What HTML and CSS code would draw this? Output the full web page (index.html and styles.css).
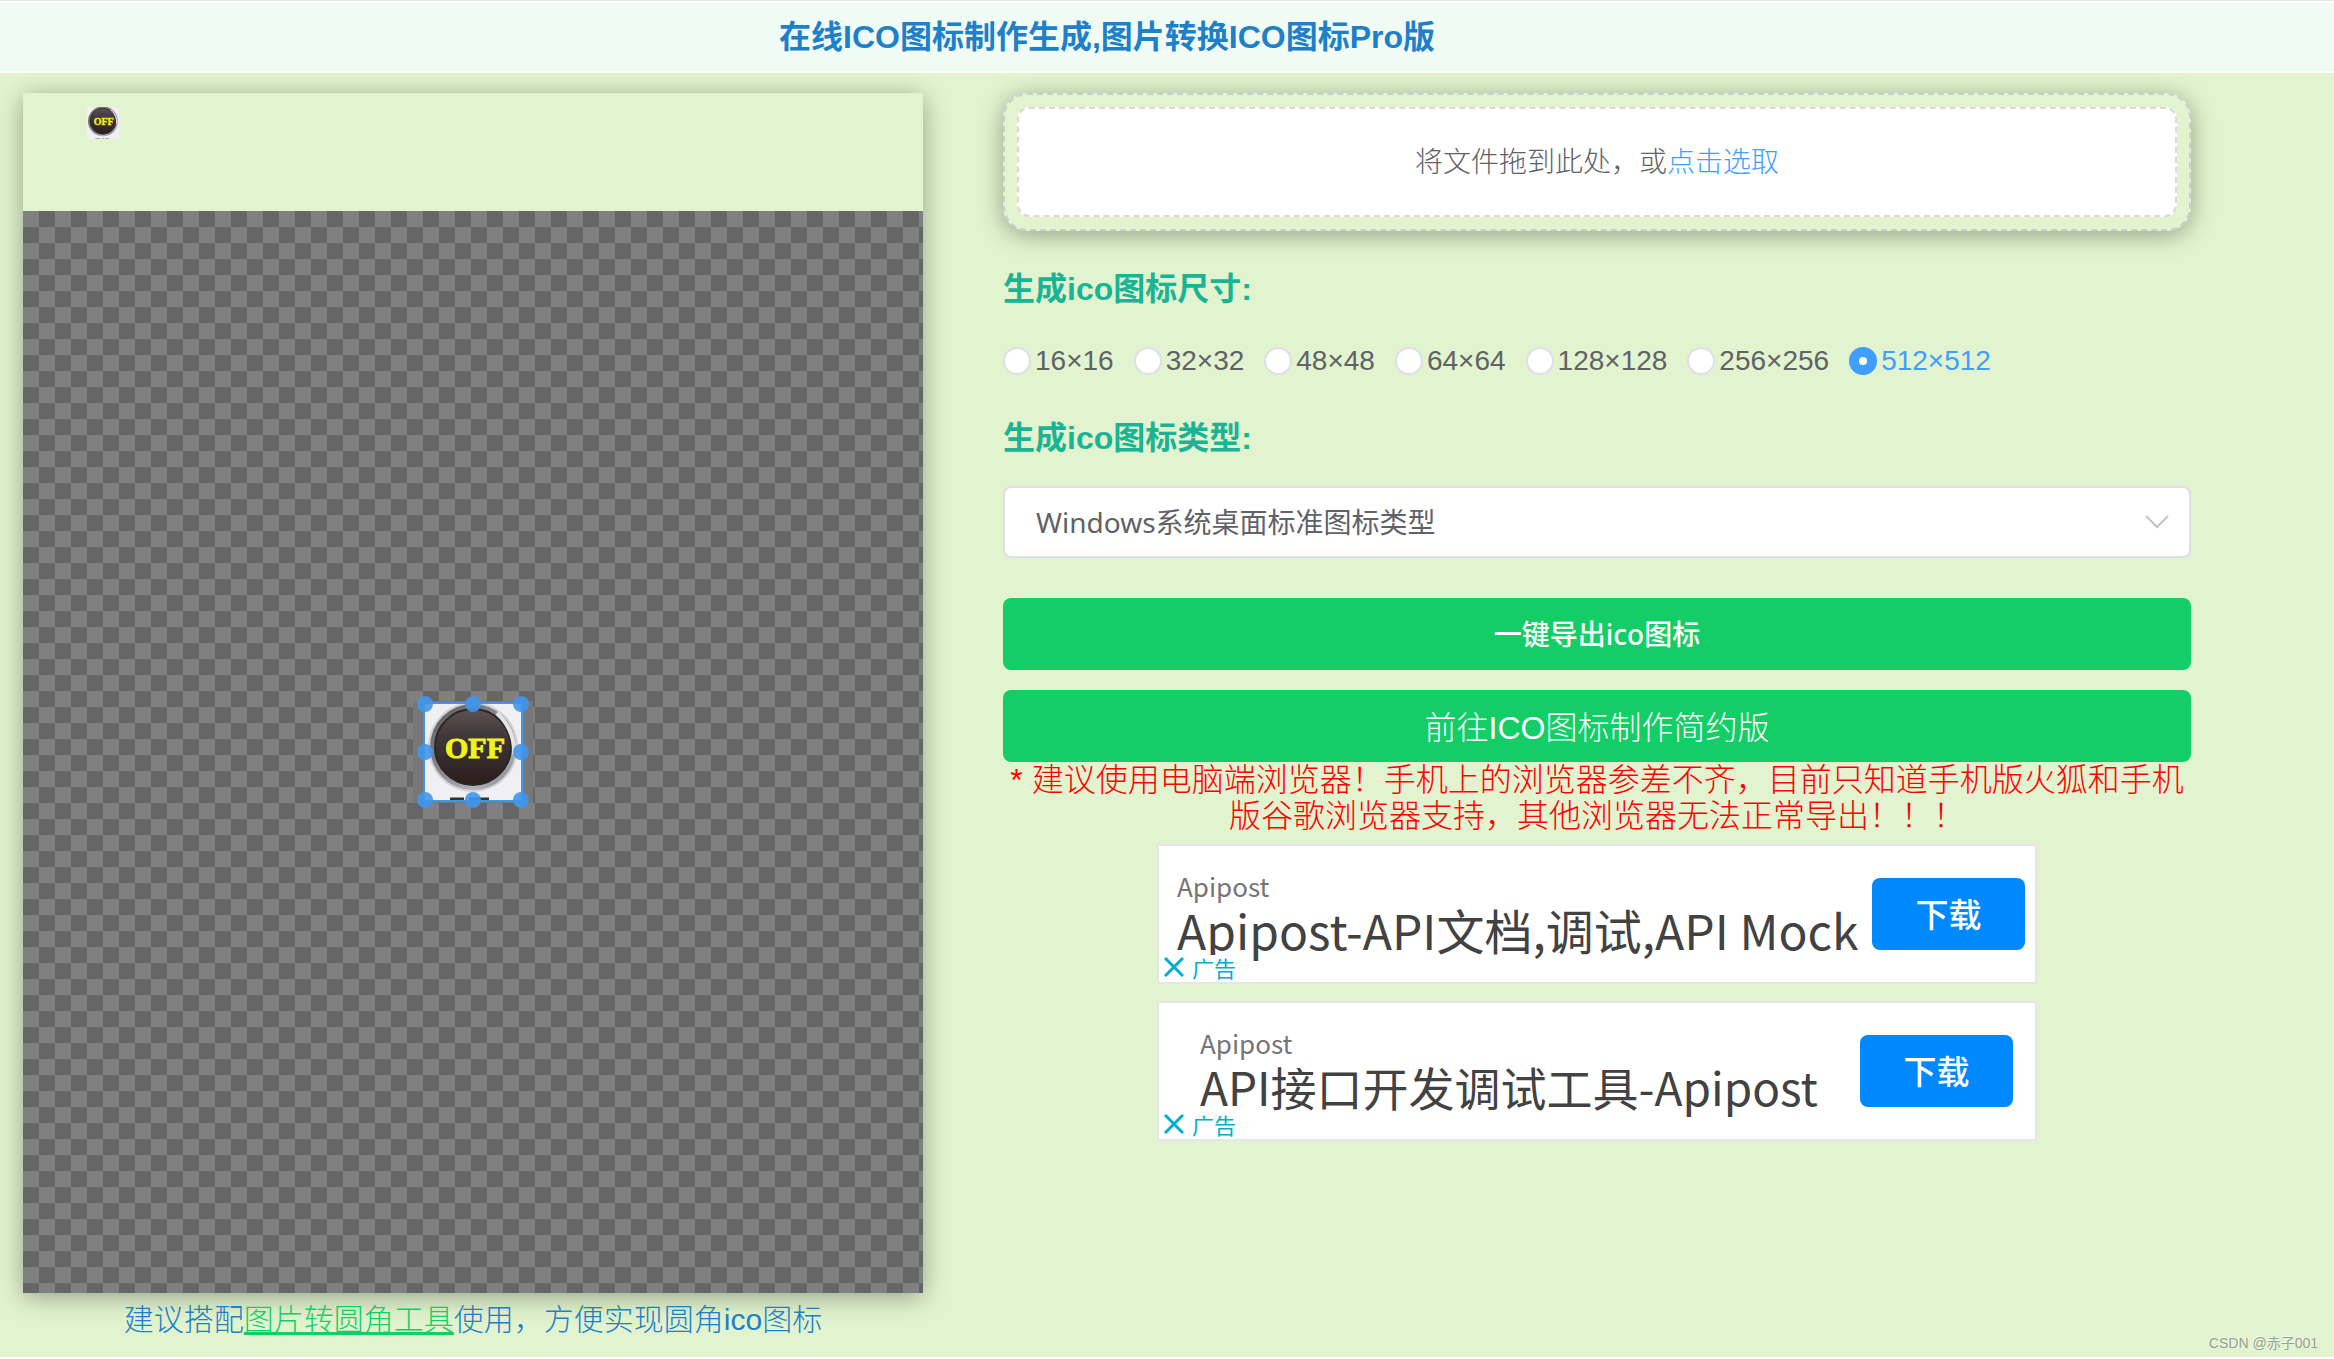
FILE: index.html
```html
<!DOCTYPE html>
<html lang="zh-CN">
<head>
<meta charset="utf-8">
<meta name="viewport" content="width=device-width, initial-scale=1">
<title>在线ICO图标制作生成</title>
<link rel="stylesheet" href="styles.css">
</head>
<body>
<header class="site-header">
  <h1 class="site-title">在线ICO图标制作生成,图片转换ICO图标Pro版</h1>
</header>

<main class="layout">
  <section class="editor">
    <div class="panel">
      <div class="preview">
        <svg class="thumb" viewBox="0 0 96 96" role="img" aria-label="OFF">
          <defs>
            <linearGradient id="knob" x1="0" y1="0" x2="0" y2="1">
              <stop offset="0" stop-color="#5c5250"/>
              <stop offset=".35" stop-color="#40383a"/>
              <stop offset="1" stop-color="#2a1e1c"/>
            </linearGradient>
            <linearGradient id="rim" x1="0" y1="0" x2="1" y2="1">
              <stop offset="0" stop-color="#5a5656"/>
              <stop offset=".45" stop-color="#8a8a8e"/>
              <stop offset=".75" stop-color="#b4b4b8"/>
              <stop offset="1" stop-color="#6c6c70"/>
            </linearGradient>
          </defs>
          <rect width="96" height="96" fill="#f0f0f2"/>
          <circle cx="48" cy="43" r="45" fill="url(#rim)"/>
          <circle cx="48" cy="43" r="39" fill="url(#knob)" stroke="#2c2626" stroke-width="2"/>
          <path d="M72 9Q90 26 89 50" fill="none" stroke="#e4e4e8" stroke-width="3"/>
          <path d="M25 95h14M44 95h8M56 95h10" stroke="#777" stroke-width="2"/>
          <text x="50" y="54" text-anchor="middle" class="off-text">OFF</text>
        </svg>
      </div>
      <div class="canvas">
        <div class="stage">
          <div class="crop">
            <svg class="crop-image" viewBox="0 0 96 96" role="img" aria-label="OFF">
              <rect width="96" height="96" fill="#f0f0f2"/>
              <circle cx="48" cy="43" r="45" fill="#d2d2d6"/>
              <circle cx="48" cy="43" r="43" fill="url(#rim)"/>
              <circle cx="48" cy="43" r="38" fill="url(#knob)" stroke="#2c2626" stroke-width="2"/>
              <path d="M72 9Q90 26 89 50" fill="none" stroke="#e4e4e8" stroke-width="4"/>
              <path d="M25 95h14M44 95h20" stroke="#333" stroke-width="3"/>
              <text x="50" y="54" text-anchor="middle" class="off-text">OFF</text>
            </svg>
            <span class="handle nw"></span><span class="handle n"></span><span class="handle ne"></span>
            <span class="handle w"></span><span class="handle e"></span>
            <span class="handle sw"></span><span class="handle s"></span><span class="handle se"></span>
          </div>
        </div>
      </div>
    </div>
    <p class="tip">建议搭配<a class="tip-link" href="#">图片转圆角工具</a>使用，方便实现圆角ico图标</p>
  </section>

  <section class="settings">
    <div class="upload">
      <div class="dropzone">将文件拖到此处，或<a class="pick" href="#">点击选取</a></div>
    </div>

    <h2 class="label" id="size-label">生成ico图标尺寸:</h2>
    <div class="sizes" role="radiogroup" aria-labelledby="size-label">
      <label class="size"><input class="radio" type="radio" name="size"><span>16×16</span></label>
      <label class="size"><input class="radio" type="radio" name="size"><span>32×32</span></label>
      <label class="size"><input class="radio" type="radio" name="size"><span>48×48</span></label>
      <label class="size"><input class="radio" type="radio" name="size"><span>64×64</span></label>
      <label class="size"><input class="radio" type="radio" name="size"><span>128×128</span></label>
      <label class="size"><input class="radio" type="radio" name="size"><span>256×256</span></label>
      <label class="size"><input class="radio" type="radio" name="size" checked><span>512×512</span></label>
    </div>

    <h2 class="label"><label for="type">生成ico图标类型:</label></h2>
    <div class="select-box">
      <select class="select" id="type"><option>Windows系统桌面标准图标类型</option></select>
      <svg class="chevron" viewBox="0 0 24 14" aria-hidden="true"><path d="M1 1l11 11L23 1"/></svg>
    </div>

    <div class="actions">
      <button class="btn btn-export" type="button">一键导出ico图标</button>
      <button class="btn btn-simple" type="button">前往ICO图标制作简约版</button>
    </div>
    <p class="warning">* 建议使用电脑端浏览器！手机上的浏览器参差不齐，目前只知道手机版火狐和手机版谷歌浏览器支持，其他浏览器无法正常导出！！！</p>

    <div class="ads">
      <article class="ad">
        <div class="ad-text">
          <span class="ad-brand">Apipost</span>
          <span class="ad-title">Apipost-API文档,调试,API Mock</span>
        </div>
        <button class="ad-btn" type="button">下载</button>
        <div class="ad-mark"><svg class="ad-close" viewBox="0 0 20 20"><path d="M1 1l18 18M19 1L1 19"/></svg>广告</div>
      </article>
      <article class="ad ad-inset">
        <div class="ad-text">
          <span class="ad-brand">Apipost</span>
          <span class="ad-title">API接口开发调试工具-Apipost</span>
        </div>
        <button class="ad-btn" type="button">下载</button>
        <div class="ad-mark"><svg class="ad-close" viewBox="0 0 20 20"><path d="M1 1l18 18M19 1L1 19"/></svg>广告</div>
      </article>
    </div>
  </section>
</main>
<div class="watermark">CSDN @赤子001</div>
</body>
</html>
```

FILE: styles.css
```css
* { box-sizing: border-box; }

body {
  margin: 0;
  min-height: 100vh;
  position: relative;
  border-bottom: 2px solid #fff;
  background: #e2f4cf;
  color: #606266;
  font-family: "Liberation Sans", "Noto Sans CJK SC", sans-serif;
  font-size: 28px;
}

h1, h2, p { margin: 0; }
.off-text { font: bold 30px "Liberation Serif", serif; fill: #f2f21c; stroke: #f2f21c; stroke-width: 1; }

.site-header {
  padding: 14px 120px 12px 0;
  background: #f0fbf6;
  border-top: 1px solid #e4e4e4;
  border-bottom: 2px solid #fff;
  box-shadow: inset 0 2px #fff;
  text-align: center;
}
.site-title { color: #1e80c8; font-size: 32px; line-height: 44px; }

.layout {
  display: grid;
  grid-template-columns: 900fr 1188fr;
  gap: 80px;
  align-items: start;
  padding: 20px 143px 0 23px;
}

.panel {
  display: flex;
  flex-direction: column;
  aspect-ratio: 3 / 4;
  box-shadow: 0 4px 24px rgba(0, 0, 0, .35);
}
.preview { height: 118px; padding: 14px 64px; }
.thumb { display: block; width: 32px; height: 32px; }
.canvas {
  flex: 1;
  display: flex;
  align-items: center;
  justify-content: center;
  background: repeating-conic-gradient(#666 0 25%, #808080 0 50%) 0 0 / 32px 32px;
}
.stage { padding: 1px 10px; background: #777; }
.crop { position: relative; width: 100px; height: 100px; border: 2px solid #3f96ec; }
.crop-image { display: block; width: 100%; height: 100%; }
.handle {
  position: absolute;
  width: 16px;
  height: 16px;
  margin: -8px;
  border-radius: 50%;
  background: #3f96ec;
  opacity: .9;
}
.nw, .n, .ne { top: 0; }
.w, .e { top: 50%; }
.sw, .s, .se { top: 100%; }
.nw, .w, .sw { left: 0; }
.n, .s { left: 50%; }
.ne, .e, .se { left: 100%; }

.tip {
  padding-top: 7px;
  color: #1e80c8;
  font-size: 30px;
  font-weight: 300;
  line-height: 40px;
  text-align: center;
}
.tip-link { color: #13ce66; text-decoration-thickness: 3px; }

.upload {
  padding: 12px;
  border: 2px dashed #ccc;
  border-radius: 24px;
  box-shadow: 0 4px 24px rgba(0, 0, 0, .35);
}
.dropzone {
  display: flex;
  align-items: center;
  justify-content: center;
  height: 110px;
  padding-bottom: 4px;
  border: 2px dashed #d9d9d9;
  border-radius: 12px;
  background: #fff;
  font-weight: 300;
}
.pick { color: #409eff; text-decoration: none; }

.label { color: #1ab394; font-size: 32px; line-height: 44px; }
.upload + .label { margin-top: 36px; }

.sizes { display: flex; flex-wrap: wrap; gap: 20px; margin: 32px 0 37px; }
.size { display: flex; align-items: center; gap: 4px; line-height: 36px; }
.radio {
  appearance: none;
  width: 28px;
  height: 28px;
  margin: 0;
  border: 2px solid #dcdfe6;
  border-radius: 50%;
  background: #fff;
}
.radio:checked { border: 10px solid #409eff; }
.radio:checked + span { color: #409eff; }

.select-box { position: relative; margin-top: 26px; }
.select {
  appearance: none;
  display: block;
  width: 100%;
  height: 72px;
  padding: 0 31px;
  border: 2px solid #dcdfe6;
  border-radius: 8px;
  background: #fff;
  color: #606266;
  font: 28px "Noto Sans", "Noto Sans CJK SC", sans-serif;
}
.chevron {
  position: absolute;
  right: 22px;
  top: 29px;
  width: 24px;
  height: 14px;
  fill: none;
  stroke: #c0c4cc;
  stroke-width: 2;
  pointer-events: none;
}

.actions { display: grid; gap: 20px; margin-top: 40px; }
.btn { height: 72px; padding: 0 0 2px; border: 0; border-radius: 8px; background: #13ce66; color: #fff; }
.btn-export { font: 500 28px "Noto Sans", "Noto Sans CJK SC", sans-serif; }
.btn-simple { font: 300 32px "Liberation Sans", "Noto Sans CJK SC", sans-serif; }

.warning { color: #f00; font-size: 32px; font-weight: 300; line-height: 36px; text-align: center; }

.ads { display: grid; justify-content: center; gap: 17px; margin-top: 10px; }
.ad {
  position: relative;
  display: flex;
  align-items: center;
  justify-content: space-between;
  width: 880px;
  max-width: 100%;
  height: 140px;
  padding: 0 10px 0 18px;
  border: 2px solid #e5e5ea;
  background: #fff;
  font-family: "Noto Sans CJK SC", sans-serif;
}
.ad-inset { padding: 0 22px 0 41px; }
.ad-text { display: flex; flex-direction: column; padding-bottom: 10px; white-space: nowrap; }
.ad-brand { color: #757575; font-size: 26px; line-height: 40px; }
.ad-title { color: #424242; font-size: 48px; line-height: 46px; }
.ad-inset .ad-title { font-size: 46px; }
.ad-btn {
  width: 153px;
  height: 72px;
  padding: 0 0 2px;
  border: 0;
  border-radius: 8px;
  background: #0088ff;
  color: #fff;
  font: 500 33px "Noto Sans CJK SC", sans-serif;
}
.ad-mark {
  position: absolute;
  left: 0;
  bottom: 3px;
  display: flex;
  align-items: center;
  gap: 8px;
  padding: 0 4px 0 5px;
  background: #fff;
  color: #00aecd;
  font-size: 22px;
  line-height: 24px;
}
.ad-close { width: 20px; height: 20px; fill: none; stroke: currentColor; stroke-width: 3; }

.watermark {
  position: absolute;
  right: 16px;
  bottom: 4px;
  color: #95a18a;
  font-size: 14px;
  line-height: 20px;
  text-shadow: -1px -1px #f4fbec;
}
```
